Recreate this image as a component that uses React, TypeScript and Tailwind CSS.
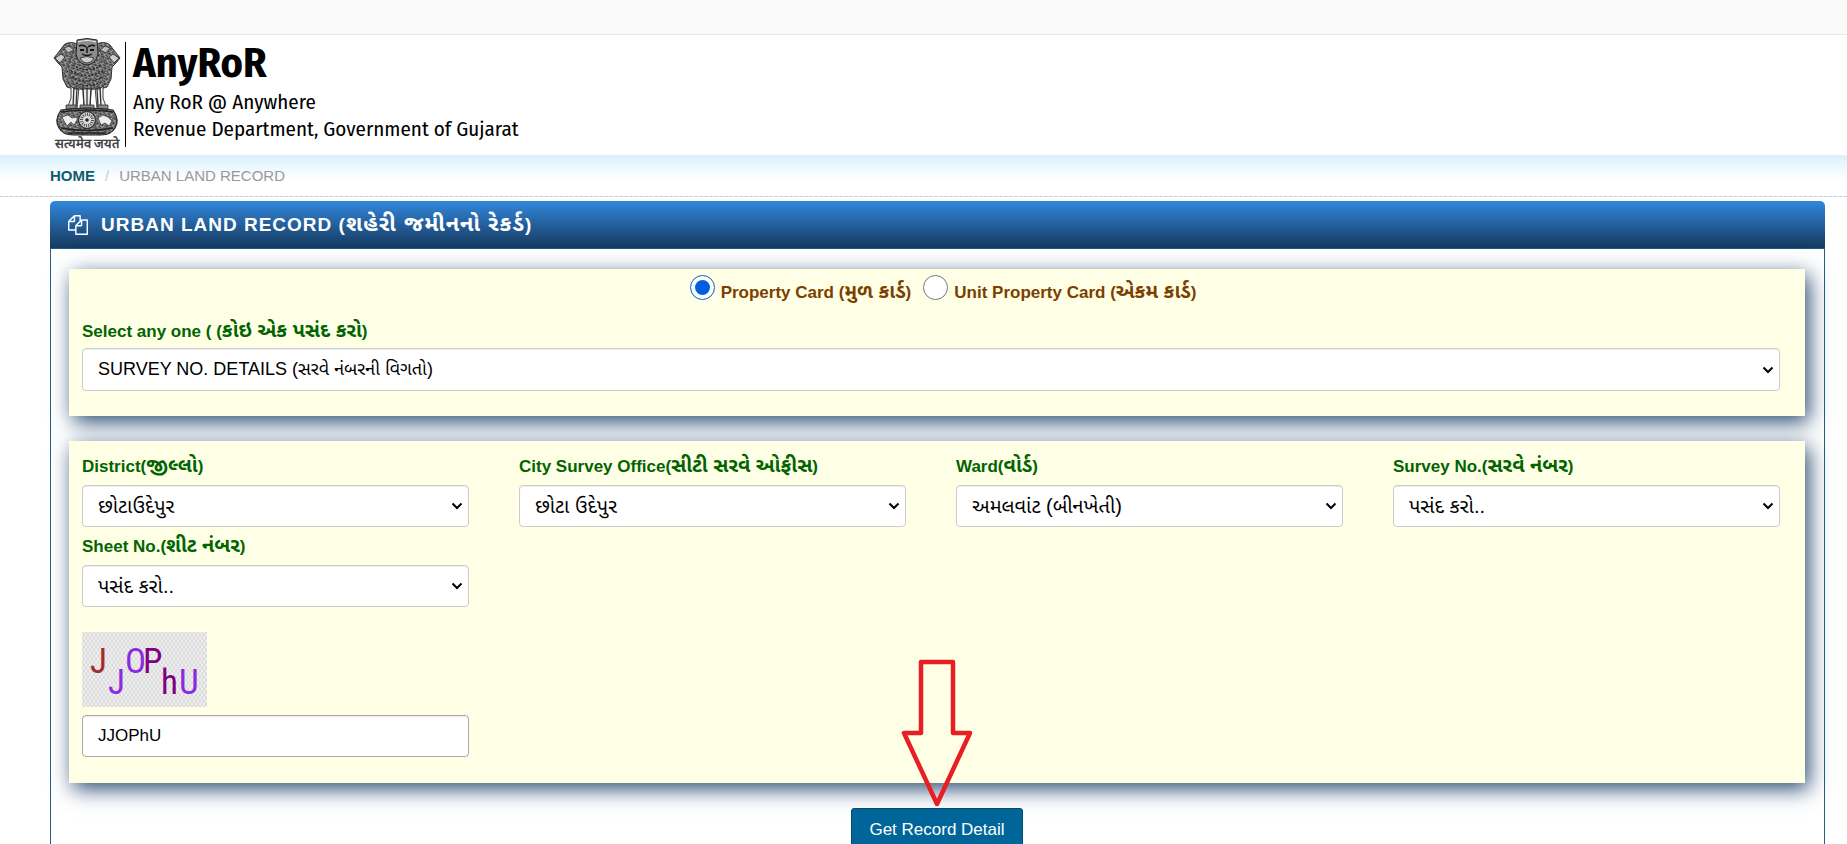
/**
 * Urban land record search page
 */

import type { ReactNode } from "react";

const FIELD =
    "block w-full rounded border bg-white px-[15px] text-black shadow-[inset_0_1px_1px_rgba(0,0,0,0.075)]";

const BOX =
    "bg-[#ffffe6] pl-[13px] pr-[25px] shadow-[4px_6px_20px_#2b4d73]";

interface FieldInfo {
    id: string;
    en: string;
    gu: string;
    value: string;
}

const FIELDS: FieldInfo[] = [
    { id: "district", en: "District(", gu: "જીલ્લો", value: "છોટાઉદેપુર" },
    { id: "office", en: "City Survey Office(", gu: "સીટી સરવે ઓફીસ", value: "છોટા ઉદેપુર" },
    { id: "ward", en: "Ward(", gu: "વોર્ડ", value: "અમલવાંટ (બીનખેતી)" },
    { id: "survey", en: "Survey No.(", gu: "સરવે નંબર", value: "પસંદ કરો.." },
    { id: "sheet", en: "Sheet No.(", gu: "શીટ નંબર", value: "પસંદ કરો.." },
];

const CAPTCHA = [
    { char: "J", x: 8, y: 41, color: "#a52a2a" },
    { char: "J", x: 26, y: 62, color: "#8a2be2" },
    { char: "O", x: 43, y: 41, color: "#8a2be2" },
    { char: "P", x: 61, y: 41, color: "#800080" },
    { char: "h", x: 79, y: 62, color: "#800080" },
    { char: "U", x: 97, y: 62, color: "#8a2be2" },
];

// Gujarati runs are set larger than the Latin text around them
const Gu = ({ children }: { children: ReactNode }) => (
    <span lang="gu" className="text-[20px]">{children}</span>
);

const SelectBox = ({ id, className, children }: { id: string; className: string; children: ReactNode }) => (
    <div className="relative">
        <select id={id} className={`${FIELD} appearance-none border-[#cccccc] ${className}`}>
            {children}
        </select>
        <svg viewBox="0 0 12 8" className="pointer-events-none absolute top-1/2 right-[6px] h-2 w-3 -translate-y-1/2" aria-hidden="true">
            <path d="M1.5 1.5L6 6l4.5-4.5" fill="none" stroke="#000" strokeWidth="2" />
        </svg>
    </div>
);

const SelectField = ({ id, en, gu, value }: FieldInfo) => (
    <div className="pb-[6px]">
        <label htmlFor={id} className="block h-8 text-[17px] leading-6 font-bold whitespace-nowrap text-[#006400]">
            {en}<Gu>{gu}</Gu>)
        </label>
        <SelectBox id={id} className="h-[42px] text-[20px]">
            <option>{value}</option>
        </SelectBox>
    </div>
);

const Emblem = () => (
    <svg viewBox="0 0 68 98" className="h-[98px] w-[68px]" aria-hidden="true">
        <defs>
            <pattern id="mane" width="5" height="5" patternUnits="userSpaceOnUse" patternTransform="rotate(18)">
                <rect width="5" height="5" fill="#5a5a5a" />
                <path d="M0 1.2q1.2 2 2.5 0T5 1.2M0 4q1.2-1.8 2.5 0T5 4" stroke="#cfcfcf" strokeWidth="0.8" fill="none" />
                <path d="M1 2.4l1.2 1M3.4 3l1-1.2M2.6 0v1" stroke="#161616" strokeWidth="0.9" />
            </pattern>
        </defs>
        {/* side lions */}
        <path d="M24 6c-4-2-10-2-13 1l-3 4-7 9 4 5 4 4 1 12 4 8 10 3z" fill="url(#mane)" stroke="#333" />
        <path d="M44 6c4-2 10-2 13 1l3 4 7 9-4 5-4 4-1 12-4 8-10 3z" fill="url(#mane)" stroke="#333" />
        <path d="M2 20l6-4 4 3-5 6zM66 20l-6-4-4 3 5 6z" fill="#ccc" stroke="#333" strokeWidth="0.9" />
        <path d="M11 10l5-2 5 4-6 3zM57 10l-5-2-5 4 6 3z" fill="#bbb" stroke="#333" strokeWidth="0.9" />
        {/* front lion */}
        <path d="M20 15l4-5h20l4 5 5 13-4 15-6 8H25l-6-8-4-15z" fill="url(#mane)" stroke="#444" strokeWidth="0.8" />
        <path d="M24 2q10-3 20 0l1 14q-2 10-11 11-9-1-11-11z" fill="#8c8c8c" stroke="#222" />
        <path d="M25 4q9-3 18 0" stroke="#eee" strokeWidth="1.2" fill="none" />
        <path d="M26 8q4-2 7 1M42 8q-4-2-7 1M34 9v6M29 16q5 3 10 0" stroke="#111" strokeWidth="1.4" fill="none" />
        <path d="M27 11h4v2h-4zM37 11h4v2h-4z" fill="#111" />
        <path d="M27 20q7-3 14 0l-3 4q-4 2-8 0z" fill="#ccc" stroke="#222" strokeWidth="0.8" />
        <path d="M20 27q14 9 28 0M18 33q16 9 32 0M19 39q15 8 30 0M23 45q11 5 22 0" stroke="#222" strokeWidth="1.2" strokeDasharray="2 1.5" fill="none" />
        {/* legs */}
        <path d="M15 45l3 3v12l-4 11h10l2-22 4 3 1 19h6l1-19 4-3 2 22h10l-4-11V48l3-3-6 6H21z" fill="#eee" stroke="#333" strokeWidth="0.9" />
        <path d="M21 49l-1 20M24 50l-1 19M30 50l1 18M34 50v19M38 50l-1 18M44 50l1 19M47 49l1 20" stroke="#333" strokeWidth="1.3" fill="none" />
        <path d="M13 67h10v4H13zM27 67h14v4H27zM45 67h10v4H45z" fill="#888" stroke="#333" strokeWidth="0.8" />
        {/* abacus */}
        <path d="M8 72q26-4 52 0 7 10 2 18-4 7-14 7H20q-10 0-14-7-5-8 2-18z" fill="url(#mane)" stroke="#222" strokeWidth="1.2" />
        <path d="M8 74q26-4 52 0M8 90q26 5 52 0M15 95h38" stroke="#222" strokeWidth="1.6" fill="none" />
        <path d="M9 79l6-2 4 3 5-1v3l-3 5-3-3-4 4-3-5zM45 80l5-3 5 2 4 4-3 5-4-3-4 2z" fill="#eee" stroke="#333" strokeWidth="0.7" />
        <circle cx="34" cy="82" r="8.5" fill="#ddd" stroke="#333" strokeWidth="1.4" />
        <circle cx="34" cy="82" r="5.5" fill="none" stroke="#444" strokeWidth="3" strokeDasharray="1 1.1" />
        <circle cx="34" cy="82" r="1.8" fill="#222" />
    </svg>
);

const CopyIcon = () => (
    <svg viewBox="0 0 1792 1792" className="size-5 fill-current" aria-hidden="true">
        <path d="M1696 384q40 0 68 28t28 68v1216q0 40-28 68t-68 28h-960q-40 0-68-28t-28-68v-288h-544q-40 0-68-28t-28-68v-672q0-40 20-88t48-76l408-408q28-28 76-48t88-20h416q40 0 68 28t28 68v328q68-40 128-40h416zm-544 213l-299 299h299v-299zm-640-384l-299 299h299v-299zm196 647l316-316v-416h-384v416q0 40-28 68t-68 28h-416v640h512v-256q0-40 20-88t48-76zm956 804v-1152h-384v416q0 40-28 68t-68 28h-416v640h896z" />
    </svg>
);

const Captcha = () => (
    <svg viewBox="0 0 125 75" className="block h-[75px] w-[125px]" role="img" aria-label="Captcha">
        <defs>
            <pattern id="weave" width="4" height="6" patternUnits="userSpaceOnUse">
                <rect width="4" height="6" fill="#f0f0f0" />
                <path d="M0 0l2 3 2-3M0 6l2-3 2 3" stroke="#cecece" strokeWidth="0.7" fill="none" />
            </pattern>
        </defs>
        <rect width="125" height="75" fill="url(#weave)" />
        {CAPTCHA.map((c) => (
            <text
                key={c.x}
                x={c.x}
                y={c.y}
                fill={c.color}
                className="font-['Roboto_Condensed',Roboto,sans-serif] text-[35px]"
            >
                {c.char}
            </text>
        ))}
    </svg>
);

const Header = () => (
    <header>
        <div className="h-[35px] border-b border-[#e7e7e7] bg-[#fafafa]" />
        <div className="flex h-[120px] items-start pt-[3px] pl-[53px]">
            <div className="flex w-[68px] flex-col items-center">
                <Emblem />
                <span className="text-[13px] leading-4 font-bold whitespace-nowrap text-[#444]">सत्यमेव जयते</span>
            </div>
            <div className="mt-1 ml-1 h-[105px] w-px bg-black" />
            <div className="ml-[7px] flex flex-col font-['Fira_Sans_Condensed','Open_Sans',sans-serif] whitespace-nowrap text-black">
                <h1 className="text-[42px] leading-[51px] font-bold">AnyRoR</h1>
                <p className="text-[21px] leading-[27px]">Any RoR @ Anywhere</p>
                <p className="text-[21px] leading-[27px]">Revenue Department, Government of Gujarat</p>
            </div>
        </div>
        <nav
            aria-label="Breadcrumb"
            className="flex h-[42px] items-center border-b border-dashed border-[#cccccc] bg-linear-to-b from-[#d9f1fc] to-white to-60% pl-[50px] text-[15px] leading-5"
        >
            <a href="#home" className="font-bold text-[#0e5c6e]">HOME</a>
            <span className="px-[10px] text-[#cccccc]">/</span>
            <span className="text-[#999999]">URBAN LAND RECORD</span>
        </nav>
    </header>
);

// Red outline arrow pointing at the submit button
const Pointer = () => (
    <svg viewBox="0 0 72 150" className="pointer-events-none absolute bottom-full left-1/2 h-[150px] w-[72px] -translate-x-1/2" aria-hidden="true">
        <path d="M20 4h32v71h17L36 146 3 75h17z" fill="none" stroke="#e81e25" strokeWidth="4.5" strokeLinejoin="round" />
    </svg>
);

export default function App() {
    return (
        <div className="min-h-screen bg-white font-['Liberation_Sans','Noto_Sans_Gujarati',sans-serif]">
            <Header />
            <main className="pt-1 pr-[22px] pl-[50px]">
                <div className="flex h-12 items-center gap-[13px] rounded-t-[5px] border-b border-[#1a5c80] bg-linear-to-b from-[#3288de] to-[#163a5f] pl-[18px] text-white">
                    <CopyIcon />
                    <h2 className="text-[19px] leading-6 font-bold tracking-[1px]">
                        URBAN LAND RECORD (<span lang="gu" className="text-[22px]">શહેરી જમીનનો રેકર્ડ</span>)
                    </h2>
                </div>
                <form className="border-x border-[#1f6084] pt-5 pr-[19px] pb-10 pl-[18px]" onSubmit={(e) => e.preventDefault()}>
                    <section className={`${BOX} pb-[25px]`}>
                        <div className="flex h-[49px] items-start justify-center gap-3 pt-[6px] pl-6 text-[17px] leading-6 font-bold text-[#7b3f00]">
                            <label className="flex gap-[6px]">
                                <input type="radio" name="card" defaultChecked className="size-[25px] accent-[#005fe0]" />
                                <span className="pt-1">Property Card (<Gu>મુળ કાર્ડ</Gu>)</span>
                            </label>
                            <label className="flex gap-[6px]">
                                <input type="radio" name="card" className="size-[25px] accent-[#005fe0]" />
                                <span className="pt-1">Unit Property Card (<Gu>એકમ કાર્ડ</Gu>)</span>
                            </label>
                        </div>
                        <label htmlFor="kind" className="block h-[30px] text-[17px] leading-6 font-bold text-[#006400]">
                            Select any one ( (<Gu>કોઇ એક પસંદ કરો</Gu>)
                        </label>
                        <SelectBox id="kind" className="h-[43px] text-[18px]">
                            <option>SURVEY NO. DETAILS (સરવે નંબરની વિગતો)</option>
                        </SelectBox>
                    </section>

                    <section className={`${BOX} mt-[25px] pt-3 pb-[26px]`}>
                        <div className="grid grid-cols-4 gap-x-[50px]">
                            {FIELDS.map((field) => (
                                <SelectField key={field.id} {...field} />
                            ))}
                        </div>
                        <div className="grid grid-cols-4 gap-x-[50px] pt-[19px]">
                            <div>
                                <Captcha />
                                <input
                                    type="text"
                                    aria-label="Captcha text"
                                    defaultValue="JJOPhU"
                                    className={`${FIELD} mt-2 h-[42px] border-[#aaaaaa] text-[17px]`}
                                />
                            </div>
                        </div>
                    </section>

                    <div className="flex justify-center pt-[25px]">
                        <div className="relative">
                            <Pointer />
                            <button type="submit" className="h-[43px] rounded-[3px] border border-[#004b70] bg-[#006699] px-[17px] text-[17px] leading-6 text-white">
                                Get Record Detail
                            </button>
                        </div>
                    </div>
                </form>
            </main>
        </div>
    );
}
